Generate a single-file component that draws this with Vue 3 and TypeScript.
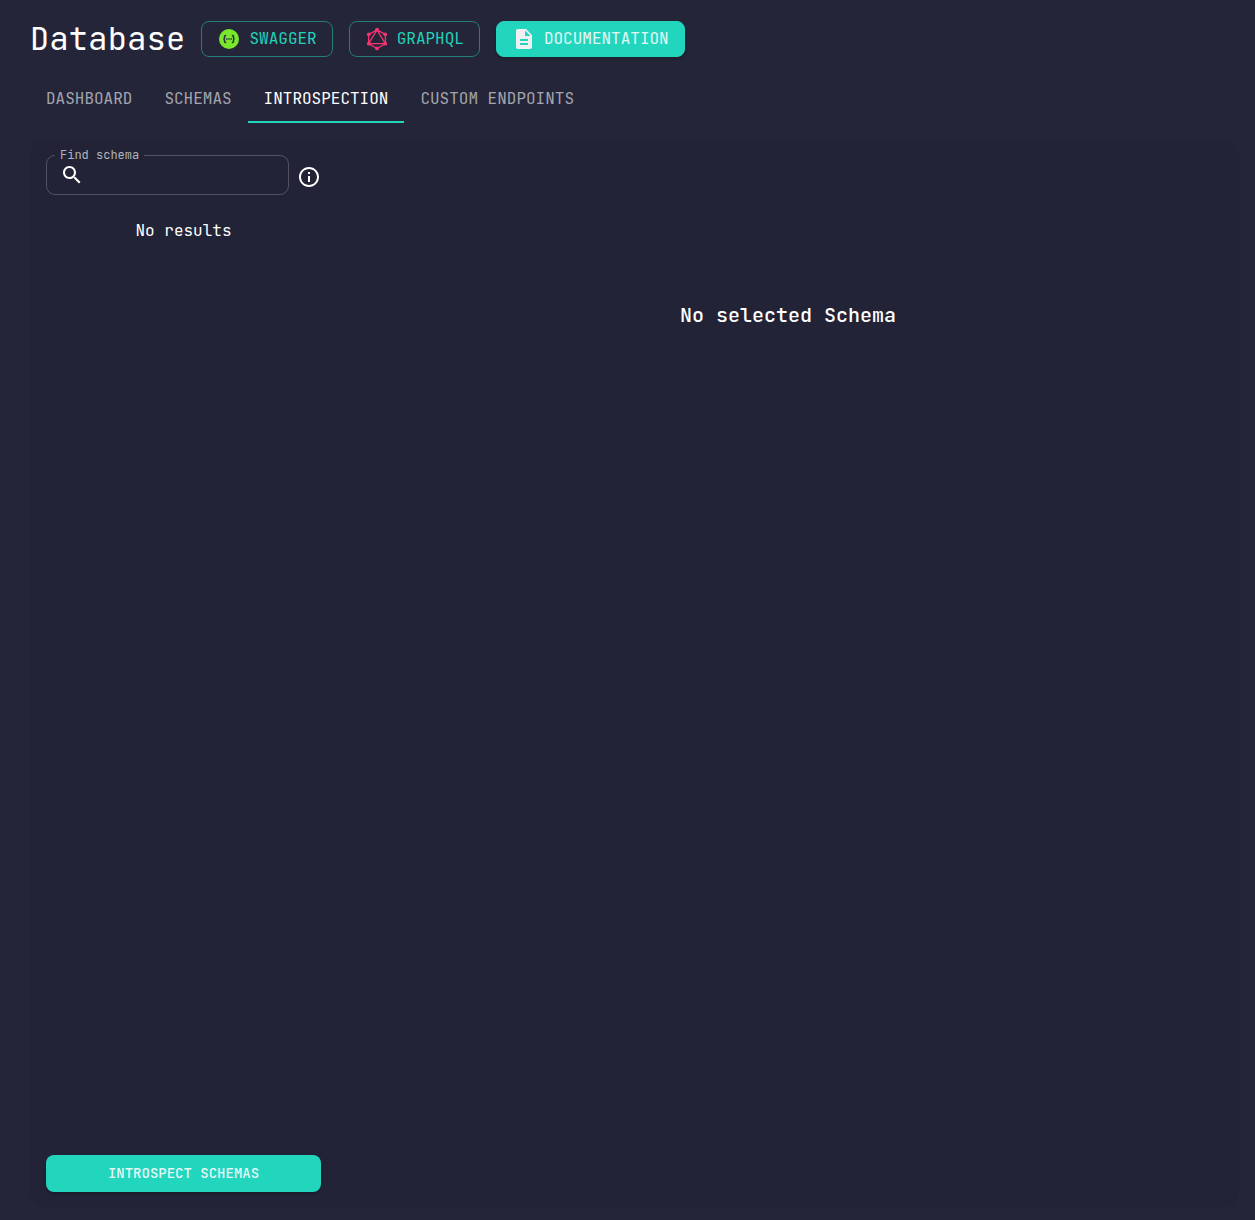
<script setup lang="ts">
import { ref } from 'vue'

const tabs: string[] = ['Dashboard', 'Schemas', 'Introspection', 'Custom Endpoints']
const activeTab = ref('Introspection')
const search = ref('')
</script>

<template>
  <main class="page">
    <header class="header">
      <h1 class="title">Database</h1>
      <button class="btn outlined">
        <svg class="icon" viewBox="0 0 24 24">
          <circle cx="12" cy="12" r="10" fill="#7be72c" />
          <g fill="none" stroke="#24313a" stroke-width="1.5">
            <path d="M9.2 8.4H8.5Q7.5 8.4 7.5 9.4V10.8Q7.5 12 6.4 12Q7.5 12 7.5 13.2V14.6Q7.5 15.6 8.5 15.6H9.2" />
            <path d="M14.8 8.4H15.5Q16.5 8.4 16.5 9.4V10.8Q16.5 12 17.6 12Q16.5 12 16.5 13.2V14.6Q16.5 15.6 15.5 15.6H14.8" />
          </g>
          <path d="M9.1 11.3h1.4v1.4H9.1zM11.3 11.3h1.4v1.4h-1.4zM13.5 11.3h1.4v1.4h-1.4z" fill="#24313a" />
        </svg>
        <span>SWAGGER</span>
      </button>
      <button class="btn outlined">
        <svg class="icon" viewBox="0 0 24 24">
          <path d="M12 2.9L20.4 7.3V16.7L12 21.5L3.6 16.7V7.3ZM12 2.9L3.6 16.7H20.4Z" fill="none" stroke="#f73472" stroke-width="1.3" />
          <g fill="#f73472">
            <circle cx="12" cy="2.7" r="1.9" /><circle cx="20.2" cy="7.3" r="1.9" />
            <circle cx="20.2" cy="16.7" r="1.9" /><circle cx="12" cy="21.4" r="1.9" />
            <circle cx="3.8" cy="16.7" r="1.9" /><circle cx="3.8" cy="7.3" r="1.9" />
          </g>
        </svg>
        <span>GRAPHQL</span>
      </button>
      <button class="btn filled">
        <svg class="icon" viewBox="0 0 24 24" fill="#f0f0f2">
          <path d="M14 2H6c-1.1 0-1.99.9-1.99 2L4 20c0 1.1.89 2 1.99 2H18c1.1 0 2-.9 2-2V8l-6-6zm2 16H8v-2h8v2zm0-4H8v-2h8v2zm-3-5V3.5L18.5 9H13z" />
        </svg>
        <span>DOCUMENTATION</span>
      </button>
    </header>

    <nav class="tabs">
      <button
        v-for="tab in tabs"
        :key="tab"
        class="tab"
        :class="{ active: tab === activeTab }"
        @click="activeTab = tab"
      >{{ tab.toUpperCase() }}</button>
    </nav>

    <section class="panel">
      <aside class="sidebar">
        <div class="search-row">
          <fieldset class="field">
            <legend>Find schema</legend>
            <div class="field-body">
              <svg class="icon" viewBox="0 0 24 24" fill="#fff">
                <path d="M15.5 14h-.79l-.28-.27C15.41 12.59 16 11.11 16 9.5 16 5.91 13.09 3 9.5 3S3 5.91 3 9.5 5.91 16 9.5 16c1.61 0 3.09-.59 4.23-1.57l.27.28v.79l5 4.99L20.49 19l-4.99-5zm-6 0C7.01 14 5 11.99 5 9.5S7.01 5 9.5 5 14 7.01 14 9.5 11.99 14 9.5 14z" />
              </svg>
              <input v-model="search" aria-label="Find schema" />
            </div>
          </fieldset>
          <svg class="icon info" viewBox="0 0 24 24" fill="#fff">
            <path d="M11 7h2v2h-2zm0 4h2v6h-2zm1-9C6.48 2 2 6.48 2 12s4.48 10 10 10 10-4.48 10-10S17.52 2 12 2zm0 18c-4.41 0-8-3.59-8-8s3.59-8 8-8 8 3.59 8 8-3.59 8-8 8z" />
          </svg>
        </div>
        <p class="empty">No results</p>
        <button class="introspect">INTROSPECT SCHEMAS</button>
      </aside>
      <div class="content">
        <h2>No selected Schema</h2>
      </div>
    </section>
  </main>
</template>

<style>
body {
  margin: 0;
  background: #242538;
}
</style>

<style scoped>
.page {
  box-sizing: border-box;
  width: 100%;
  height: 1220px;
  padding: 21px 16px 13px 30px;
  display: flex;
  flex-direction: column;
  background: #242538;
  color: #fff;
  font-family: 'JetBrains Mono', 'DejaVu Sans Mono', monospace;
  font-size: 16px;
}
button,
input {
  font: inherit;
  letter-spacing: inherit;
  color: inherit;
  border: 0;
  background: none;
  padding: 0;
}
.icon {
  width: 24px;
  height: 24px;
  flex: none;
  display: block;
}
.header {
  display: flex;
  align-items: center;
  gap: 16px;
  height: 36px;
}
.title {
  margin: 0;
  font-size: 32px;
  line-height: 36px;
  font-weight: 400;
  letter-spacing: 0.00735em;
  white-space: nowrap;
}
.btn {
  box-sizing: border-box;
  height: 36px;
  display: flex;
  align-items: center;
  gap: 8px;
  padding: 0 15px;
  border: 1px solid #257c7b;
  border-radius: 8px;
  color: #22d3bb;
  line-height: 34px;
}
.btn.filled {
  background: #22d5bd;
  border-color: #22d5bd;
  color: #e4f8f6;
  box-shadow: 0 2px 3px rgba(0, 0, 0, 0.2);
}
.tabs {
  display: flex;
  height: 48px;
  margin-top: 18px;
}
.tab {
  box-sizing: border-box;
  height: 48px;
  padding: 2px 16px 0;
  border-bottom: 2px solid transparent;
  color: #a4a5ae;
  line-height: 44px;
}
.tab.active {
  color: #fff;
  border-bottom-color: #22d5bd;
}
.panel {
  flex: 1;
  margin-top: 16px;
  padding: 8px 16px 15px;
  display: flex;
  gap: 32px;
  border-radius: 16px;
  background: #222336;
}
.sidebar {
  width: 275px;
  flex: none;
  display: flex;
  flex-direction: column;
}
.search-row {
  display: flex;
  justify-content: space-between;
  height: 48px;
}
.field {
  box-sizing: border-box;
  width: 243px;
  height: 48px;
  min-width: 0;
  margin: 0;
  padding: 0 13px 0 8px;
  border: 1px solid #515260;
  border-radius: 9px;
}
legend {
  height: 17px;
  padding: 0 5px;
  color: #b2b3bb;
  font-size: 12px;
  line-height: 17px;
}
.field-body {
  display: flex;
  align-items: center;
  margin-top: -1px;
  padding-left: 5px;
  gap: 8px;
}
.field-body input {
  flex: 1;
  min-width: 0;
  height: 20px;
  outline: 0;
}
.info {
  margin: 18px 0 0;
}
.empty {
  margin: 25px 0 0;
  line-height: 22px;
  text-align: center;
}
.introspect {
  height: 37px;
  margin-top: auto;
  padding-bottom: 2px;
  border-radius: 8px;
  background: #22d5bd;
  color: #e4f8f6;
  font-size: 14px;
  font-weight: 500;
  box-shadow: 0 2px 3px rgba(0, 0, 0, 0.25);
}
.content {
  flex: 1;
  text-align: center;
}
h2 {
  margin: 153px 0 0;
  font-size: 20px;
  line-height: 30px;
  font-weight: 500;
}
</style>
